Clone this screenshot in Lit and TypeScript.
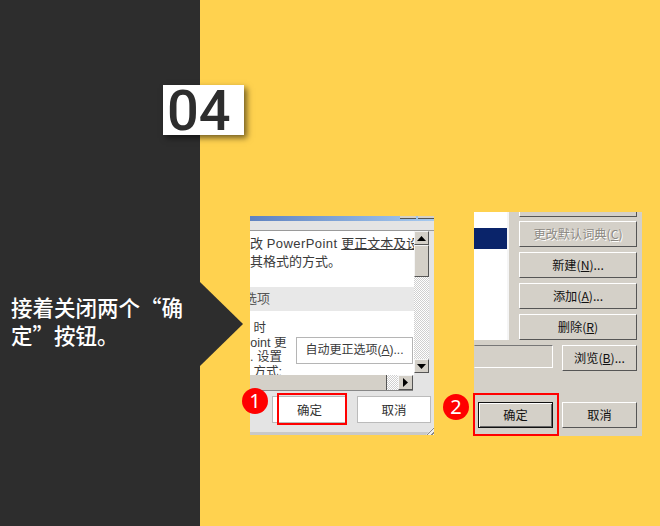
import { LitElement, html, css } from "lit";
import { customElement } from "lit/decorators.js";

@customElement("app-root")
export class AppRoot extends LitElement {
  static styles = css`
    :host { display: block; width: 660px; height: 526px; overflow: hidden; font-family: "Liberation Sans", "Noto Sans CJK SC", sans-serif; }
    * { box-sizing: border-box; }
    .slide { position: relative; display: grid; grid-template-columns: 200px 1fr; width: 660px; height: 526px; background: #ffd24f; }
    .side { background: #2d2d2d; padding: 293px 0 0 11px; color: #fff; font: 500 21.5px/28px "Noto Sans CJK SC", sans-serif; }
    .side p { margin: 0; width: 186px; }
    .arrow { position: absolute; left: 200px; top: 282px; width: 43px; height: 84px; background: #2d2d2d; clip-path: polygon(0 0, 100% 50%, 0 100%); }
    .num { position: absolute; left: 163px; top: 85px; width: 81px; height: 50px; background: #fff; box-shadow: 3px 3px 6px rgba(0,0,0,.55); color: #2d2d2d; font: 500 56px/53px Roboto, sans-serif; padding-left: 4px; }
    .main { display: flex; align-items: flex-start; padding: 212px 0 0 50px; gap: 40px; }
    .w1 { position: relative; width: 184px; height: 219px; margin-top: 4px; background: #e4e4e4; display: flex; flex-direction: column; }
    .title { height: 5px; flex: none; background: linear-gradient(90deg, #5f82c0, #a6caf0); position: relative; }
    .caps { position: absolute; top: 0; right: 0; display: flex; gap: 2px; }
    .caps i { display: block; width: 16px; height: 3px; background: #d4d0c8; border-bottom: 1px solid #555; }
    .content { display: flex; margin-top: 9px; height: 161px; border-top: 1px solid #9a9a9a; flex: none; }
    .left { width: 164px; flex: none; display: flex; flex-direction: column; }
    .panel { width: 164px; height: 144px; background: #fff; overflow: hidden; font-size: 13px; color: #3a3a3a; flex: none; }
    .pad { height: 4px; }
    .line { white-space: nowrap; line-height: 18px; height: 18px; overflow: hidden; }
    .lat { letter-spacing: .45px; }
    .u { text-decoration: underline; }
    .band { margin-top: 16px; height: 24px; background: #e8e8e8; line-height: 24px; margin-bottom: 10px; overflow: hidden; color: #555; }
    .band span { margin-left: -6px; display: inline-block; }
    .opt { display: flex; }
    .optt { width: 46px; flex: none; font-size: 12.5px; line-height: 14.5px; white-space: nowrap; overflow: hidden; }
    .optt span { display: inline-block; margin-left: -8px; }
    .auto { width: 117px; height: 27px; margin: 16px 0 0 0; background: #fff; border: 1px solid #b5b5b5; line-height: 25px; text-align: center; font-size: 12px; white-space: nowrap; flex: none; }
    .hbar { height: 16px; background: #d4d0c8; display: flex; width: 163px; flex: none; border-bottom: 1px solid #888; }
    .hthumb { width: 137px; background: #d4d0c8; border-right: 1px solid #555; }
    .hatch { background-color: #f0f0f0; background-image: repeating-conic-gradient(#cfcfcf 0 25%, #fff 0 50%); background-size: 2px 2px; }
    .hh { width: 11px; }
    .sb { width: 15px; height: 100%; display: flex; flex-direction: column; }
    .sbb { height: 14px; flex: none; background: #d4d0c8; border: 1px solid; border-color: #f5f5f5 #555 #555 #f5f5f5; display: flex; align-items: center; justify-content: center; }
    .thumb { height: 32px; flex: none; background: #d4d0c8; border: 1px solid; border-color: #f5f5f5 #555 #555 #f5f5f5; }
    .sbtrack { height: 82px; flex: none; }
    .hbtn { width: 15px; height: 15px; background: #d4d0c8; border: 1px solid; border-color: #f5f5f5 #555 #555 #f5f5f5; display: flex; align-items: center; justify-content: center; }
    .foot { display: flex; gap: 10px; padding: 5px 0 0 22px; height: 45px; position: relative; font: 12.5px "Noto Sans CJK SC", sans-serif; color: #333; }
    .fbtn { width: 74px; height: 27px; background: #fff; border: 1px solid #bbb; text-align: center; line-height: 25px; flex: none; }
    .ok { width: 75px; }
    .bottom { position: absolute; left: 0; right: 0; bottom: 0; height: 3px; background: #c9c9c9; }
    .grip { position: absolute; right: 0; bottom: 0; width: 8px; height: 8px; background: repeating-linear-gradient(135deg, #888 0 1px, #eee 1px 3px); clip-path: polygon(100% 0, 100% 100%, 0 100%); }
    .red { position: absolute; border: 2px solid #f00; }
    .r1 { left: 27px; top: 177px; width: 70px; height: 32px; }
    .dot { position: absolute; width: 26px; height: 26px; border-radius: 50%; background: #f00; color: #fff; text-align: center; font: 400 20px/26px "Noto Sans", sans-serif; }
    .d1 { left: -8px; top: 172px; }
    .w2 { position: relative; width: 168px; height: 224px; background: #d4d0c8; display: grid; grid-template-columns: 34px 1fr; grid-template-rows: 128px auto 1fr; font: 12.2px "Noto Sans CJK SC", sans-serif; color: #111; }
    .list { height: 128px; background: #fff; border-right: 1px solid #f5f5f5; box-shadow: 1px 0 0 #f5f5f5; padding-top: 16px; }
    .sel { height: 21px; background: #0a246a; }
    .btns { padding: 0 0 0 11px; display: flex; flex-direction: column; gap: 5px; }
    .b { width: 118px; height: 26px; flex: none; border: 1px solid; border-color: #fff #555 #555 #fff; background: #d4d0c8; text-align: center; line-height: 24px; white-space: nowrap; }
    .b.cut { height: 5px; border-top: 0; margin-bottom: -1px; }
    .dis { color: #8d8a84; text-shadow: 1px 1px 0 #fff; }
    .row { grid-column: 1 / 3; display: flex; padding-top: 5px; height: 62px; }
    .inp { width: 79px; height: 23px; flex: none; border: 1px solid; border-color: #777 #fff #fff transparent; }
    .browse { width: 75px; height: 26px; margin-left: 9px; flex: none; }
    .foot2 { grid-column: 1 / 3; display: flex; gap: 9px; padding: 0 0 0 4px; }
    .okb { width: 75px; height: 26px; flex: none; text-align: center; line-height: 24px; border: 1px solid #111; box-shadow: inset 1px 1px 0 #fff, inset -1px -1px 0 #666; }
    .cb { width: 75px; }
    .r2 { left: -1px; top: 181px; width: 86px; height: 43px; }
    .d2 { left: -31px; top: 182px; }
  `;

  private up() { return html`<svg width="9" height="5" viewBox="0 0 9 5"><path d="M4.5 0L9 5H0z" fill="#000"/></svg>`; }
  private down() { return html`<svg width="9" height="5" viewBox="0 0 9 5"><path d="M0 0H9L4.5 5z" fill="#000"/></svg>`; }
  private right() { return html`<svg width="5" height="9" viewBox="0 0 5 9"><path d="M0 0L5 4.5 0 9z" fill="#000"/></svg>`; }

  render() {
    return html`<div class="slide">
      <div class="side"><p>接着关闭两个“确定”按钮。</p></div>
      <div class="main">
        <div class="w1">
          <div class="title"><div class="caps"><i></i><i></i></div></div>
          <div class="content">
            <div class="left">
              <div class="panel">
                <div class="pad"></div>
                <div class="line">改 <span class="lat">PowerPoint</span> <span class="u">更正文本及设</span></div>
                <div class="line">其格式的方式。</div>
                <div class="band"><span>选项</span></div>
                <div class="opt">
                  <div class="optt">&nbsp;时<br /><span>Point 更</span><br />. 设置<br />&nbsp;方式:</div>
                  <div class="auto">自动更正选项(<u>A</u>)...</div>
                </div>
              </div>
              <div class="hbar"><div class="hthumb"></div><div class="hatch hh"></div><div class="hbtn">${this.right()}</div></div>
            </div>
            <div class="sb">
              <div class="sbb">${this.up()}</div>
              <div class="thumb"></div>
              <div class="hatch sbtrack"></div>
              <div class="sbb">${this.down()}</div>
            </div>
          </div>
          <div class="foot">
            <div class="fbtn ok">确定</div>
            <div class="fbtn">取消</div>
            <div class="bottom"></div>
            <div class="grip"></div>
          </div>
          <div class="red r1"></div>
          <div class="dot d1">1</div>
        </div>
        <div class="w2">
          <div class="list"><div class="sel"></div></div>
          <div class="btns">
            <div class="b cut"></div>
            <div class="b dis">更改默认词典(<u>C</u>)</div>
            <div class="b">新建(<u>N</u>)...</div>
            <div class="b">添加(<u>A</u>)...</div>
            <div class="b">删除(<u>R</u>)</div>
          </div>
          <div class="row"><div class="inp"></div><div class="b browse">浏览(<u>B</u>)...</div></div>
          <div class="foot2"><div class="okb">确定</div><div class="b cb">取消</div></div>
          <div class="red r2"></div>
          <div class="dot d2">2</div>
        </div>
      </div>
      <div class="arrow"></div>
      <div class="num">04</div>
    </div>`;
  }
}
